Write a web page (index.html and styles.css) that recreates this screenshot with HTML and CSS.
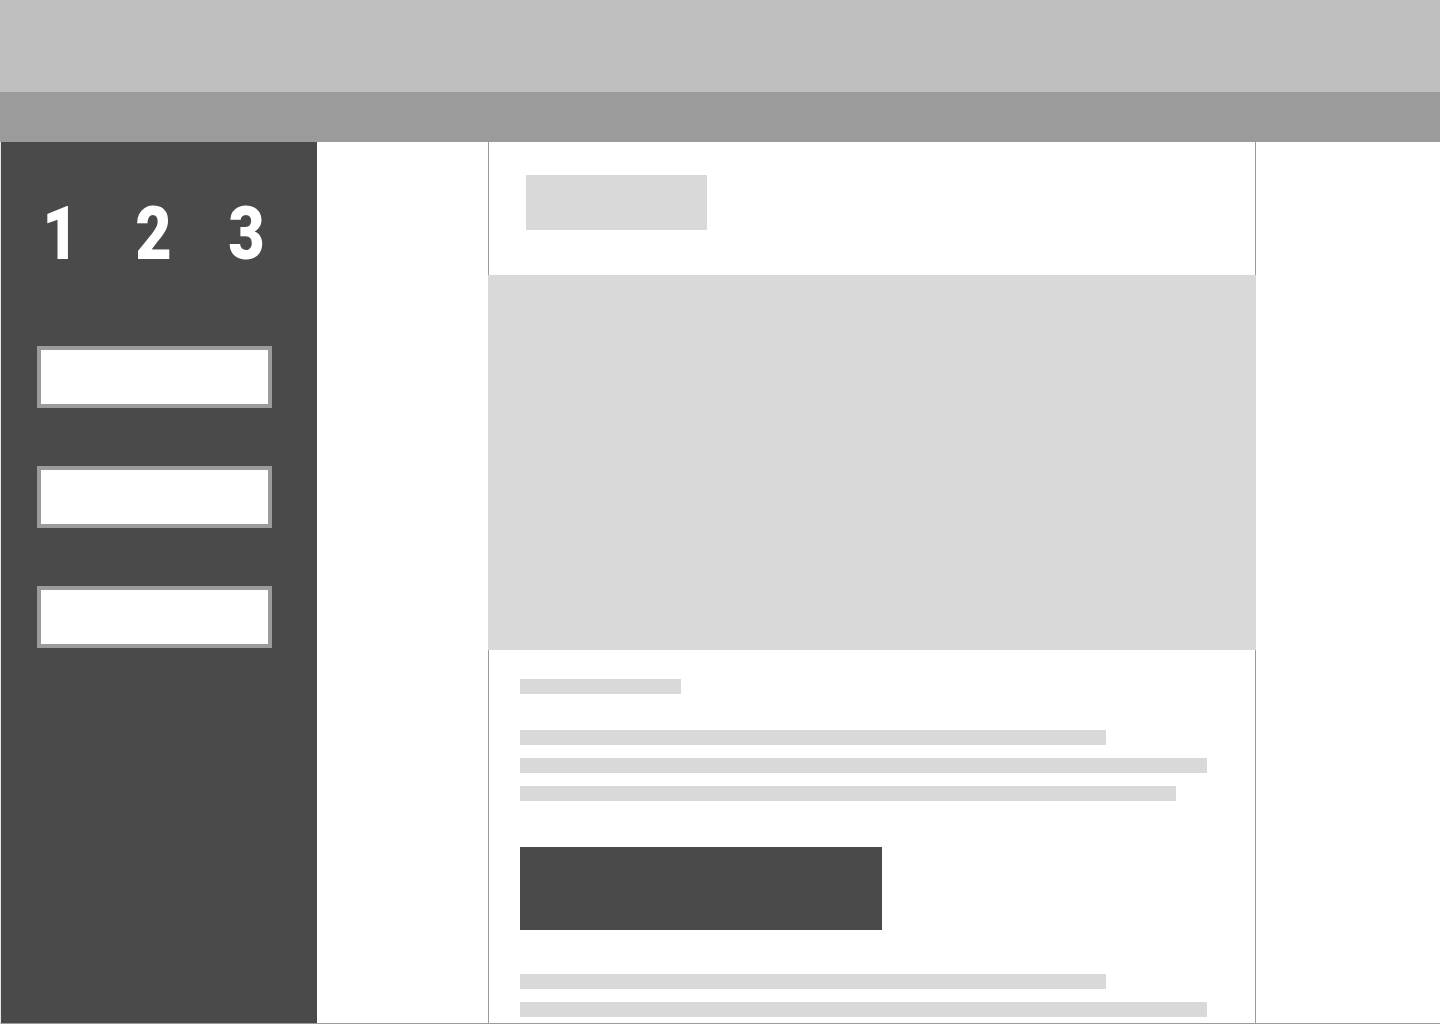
FILE: index.html
```html
<!DOCTYPE html>
<html lang="en">
<head>
    <meta charset="UTF-8">
    <meta name="viewport" content="width=device-width, initial-scale=1.0">
    <title>Checkout Steps</title>
    <link rel="stylesheet" href="styles.css">
</head>
<body>
    <div class="topbar"></div>
    <div class="subbar"></div>
    <div class="layout">
        <aside class="sidebar">
            <div class="steps">
                <span class="step">1</span>
                <span class="step">2</span>
                <span class="step">3</span>
            </div>
            <div class="fields">
                <div class="field"></div>
                <div class="field"></div>
                <div class="field"></div>
            </div>
        </aside>
        <main class="content">
            <div class="card">
                <div class="card-head">
                    <div class="logo-block"></div>
                </div>
                <div class="hero"></div>
                <div class="card-body">
                    <div class="line title"></div>
                    <div class="lines">
                        <div class="line w1"></div>
                        <div class="line w2"></div>
                        <div class="line w3"></div>
                    </div>
                    <div class="cta"></div>
                    <div class="lines">
                        <div class="line w1"></div>
                        <div class="line w2"></div>
                    </div>
                </div>
            </div>
        </main>
    </div>
</body>
</html>
```

FILE: styles.css
```css
* {
    box-sizing: border-box;
}
html, body {
    margin: 0;
    padding: 0;
    height: 100vh;
    overflow: hidden;
}
body {
    display: flex;
    flex-direction: column;
    font-family: 'Roboto', 'Liberation Sans', sans-serif;
    background-color: #fff;
}
.topbar {
    height: 92px;
    background-color: #bfbfbf;
}
.subbar {
    height: 50px;
    background-color: #9b9b9b;
}
.layout {
    flex: 1;
    display: flex;
    border-left: 1px solid #e6e6e6;
    border-bottom: 1px solid #9b9b9b;
    min-height: 0;
}
.sidebar {
    width: 316px;
    background-color: #4a4a4a;
    display: flex;
    flex-direction: column;
    padding: 52px 0 0 36px;
}
.steps {
    display: flex;
    gap: 51px;
    height: 80px;
    align-items: center;
    color: white;
    font-weight: 900;
    font-size: 74px;
    line-height: 1;
    padding-left: 2px;
}
.step {
    display: inline-block;
    width: 42px;
    text-align: center;
    transform: scaleX(0.85);
}
.fields {
    display: flex;
    flex-direction: column;
    gap: 58px;
    margin-top: 72px;
}
.field {
    width: 235px;
    height: 62px;
    background-color: #fff;
    border: 4px solid #9b9b9b;
}
.content {
    flex: 1;
    padding-left: 171px;
}
.card {
    width: 768px;
    height: 100%;
    border-left: 1px solid #9b9b9b;
    border-right: 1px solid #9b9b9b;
    display: flex;
    flex-direction: column;
}
.card-head {
    height: 133px;
    padding: 33px 0 0 37px;
}
.logo-block {
    width: 181px;
    height: 55px;
    background-color: #d9d9d9;
}
.hero {
    height: 375px;
    margin: 0 -1px;
    background-color: #d9d9d9;
}
.card-body {
    padding: 29px 0 0 31px;
    display: flex;
    flex-direction: column;
}
.line {
    height: 15px;
    background-color: #d9d9d9;
}
.line.title { width: 161px; }
.line.w1 { width: 586px; }
.line.w2 { width: 687px; }
.line.w3 { width: 656px; }
.lines {
    display: flex;
    flex-direction: column;
    gap: 13px;
    margin-top: 36px;
}
.cta {
    width: 362px;
    height: 83px;
    margin-top: 46px;
    margin-bottom: 8px;
    background-color: #4a4a4a;
}
```
